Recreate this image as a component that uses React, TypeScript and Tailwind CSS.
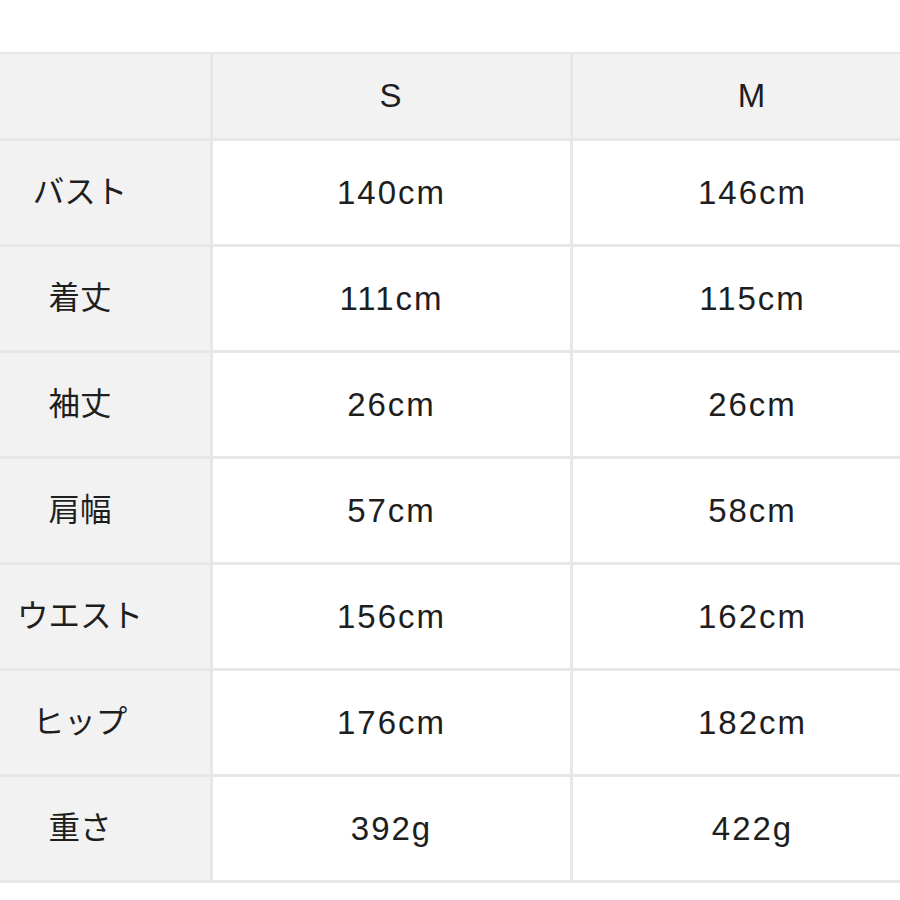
const rows = [
    { label: "バスト", s: "140cm", m: "146cm" },
    { label: "着丈", s: "111cm", m: "115cm" },
    { label: "袖丈", s: "26cm", m: "26cm" },
    { label: "肩幅", s: "57cm", m: "58cm" },
    { label: "ウエスト", s: "156cm", m: "162cm" },
    { label: "ヒップ", s: "176cm", m: "182cm" },
    { label: "重さ", s: "392g", m: "422g" },
];

const font = { fontFamily: '"Liberation Sans", "Noto Sans CJK JP", sans-serif' };

const App = () => {
    return (
        <div className="w-[900px] h-[900px] overflow-hidden bg-white pt-[52px]" style={font}>
            <div className="w-[932px] grid grid-cols-[210px_357px_359px] grid-rows-[84px_repeat(7,103px)] gap-[3px] pt-[2px] pb-[3px] bg-[#e7e7e7] text-[#1e1e1e]">
                <div className="bg-[#f2f2f2]"></div>
                <div className="bg-[#f2f2f2] flex items-center justify-center text-[33px] tracking-[0.06em]">S</div>
                <div className="bg-[#f2f2f2] flex items-center justify-center text-[33px] tracking-[0.06em]">M</div>
                {rows.map((row, i) => (
                    <div key={i} className="contents">
                        <div className="bg-[#f2f2f2] flex items-center justify-center pr-[50px] text-[31.5px] whitespace-nowrap">
                            {row.label}
                        </div>
                        <div className="bg-white flex items-center justify-center text-[33px] tracking-[0.06em]">
                            {row.s}
                        </div>
                        <div className="bg-white flex items-center justify-center text-[33px] tracking-[0.06em]">
                            {row.m}
                        </div>
                    </div>
                ))}
            </div>
        </div>
    );
};

export default App;
